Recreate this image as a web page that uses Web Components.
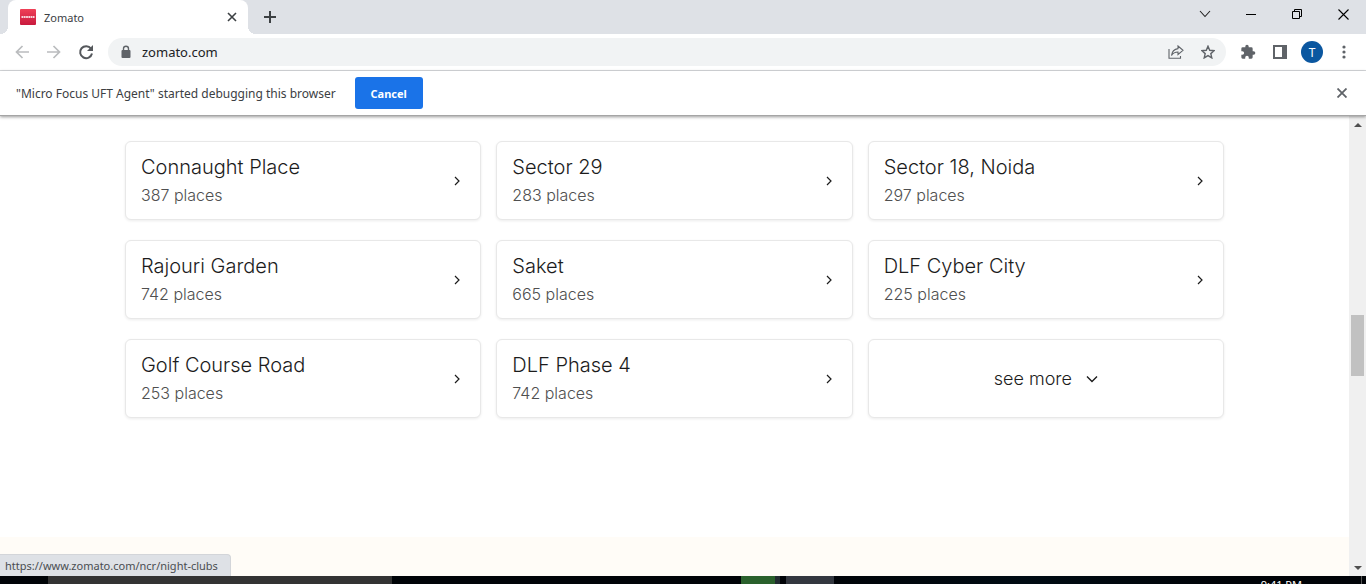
<!DOCTYPE html>
<html lang="en">
<head>
<meta charset="utf-8">
<title>Zomato</title>
<style>
html, body { height: 100%; margin: 0; }
body { font-family: "Noto Sans", "Open Sans", sans-serif; font-size: 11px; color: #3c4043; overflow: hidden; }
</style>
</head>
<body>
<browser-window></browser-window>
<script>
function define(name, html) {
  const template = document.createElement('template');
  template.innerHTML = '<style>*{box-sizing:border-box}svg{display:block;flex:none}button{font:inherit;color:inherit;background:none;border:0;padding:0;margin:0;display:flex;align-items:center;justify-content:center}</style>' + html;
  customElements.define(name, class extends HTMLElement {
    constructor() {
      super();
      this.attachShadow({ mode: 'open' }).append(template.content.cloneNode(true));
    }
  });
}

define('tab-strip', `
<style>
:host { display: flex; height: 34px; background: #dee1e6; color: #3c4043; padding-left: 8px; }
.tab { position: relative; width: 240px; background: #fff; border-radius: 8px 8px 0 0; display: flex; align-items: center; padding: 0 11px 0 12px; gap: 8px; }
.tab::before, .tab::after { content: ""; position: absolute; bottom: 0; width: 8px; height: 8px; }
.tab::before { left: -8px; background: radial-gradient(circle at 0 0, transparent 8px, #fff 8px); }
.tab::after { right: -8px; background: radial-gradient(circle at 100% 0, transparent 8px, #fff 8px); }
.title { flex: 1; }
.new { width: 44px; }
.controls { margin-left: auto; display: flex; }
.controls button { width: 46px; height: 28px; }
</style>
<div class="tab">
  <svg width="16" height="16" viewBox="0 0 16 16"><defs><linearGradient id="g" x2="0" y2="1"><stop stop-color="#ef4057"/><stop offset="1" stop-color="#c81a3e"/></linearGradient></defs><rect width="16" height="16" rx="1" fill="url(#g)"/><path d="M1.500 8h13" fill="none" stroke="#fff" stroke-opacity=".8" stroke-width="2" stroke-dasharray="1.800 .5"/></svg>
  <span class="title">Zomato</span>
  <button aria-label="Close tab"><svg width="10" height="10" viewBox="0 0 10 10"><path d="M1 1l8 8M9 1l-8 8" stroke="#3c4043" stroke-width="1.600"/></svg></button>
</div>
<button class="new" aria-label="New tab"><svg width="12" height="12" viewBox="0 0 12 12"><path d="M6 0v12M0 6h12" stroke="#3c4043" stroke-width="2"/></svg></button>
<div class="controls">
  <button aria-label="Search tabs"><svg width="12" height="8" viewBox="0 0 12 8"><path d="M1 1l5 5.500L11 1" fill="none" stroke="#222" stroke-width="1.100"/></svg></button>
  <button aria-label="Minimize"><svg width="10" height="10" viewBox="0 0 10 10"><path d="M0 5.500h10" stroke="#000"/></svg></button>
  <button aria-label="Restore"><svg width="10" height="10" viewBox="0 0 10 10"><path d="M.5 2.500h7v7h-7zM2.500 2.500v-2h7v7h-2" fill="none" stroke="#000"/></svg></button>
  <button aria-label="Close"><svg width="11" height="11" viewBox="0 0 11 11"><path d="M.5.5l10 10M10.500.5l-10 10" stroke="#000" stroke-width="1.100"/></svg></button>
</div>`);

define('tool-bar', `
<style>
:host { display: flex; align-items: center; height: 37px; background: #fff; border-bottom: 1px solid #d9dbde; padding: 0 6px; }
.nav { width: 32px; height: 28px; }
.address { flex: 1; display: flex; align-items: center; height: 28px; margin: 0 6px; border-radius: 14px; background: #f1f3f4; padding: 0 2px 0 12px; gap: 10px; }
input { flex: 1; min-width: 0; border: 0; padding: 0; background: none; font: 13px/20px "Noto Sans", "Open Sans", sans-serif; color: #202124; outline: 0; }
.address button { width: 32px; height: 28px; }
.tail, .actions { display: flex; }
.avatar { width: 22px; height: 22px; border-radius: 50%; background: #0b57a0; color: #fff; font-size: 12px; margin: 3px 5px; }
</style>
<button class="nav" aria-label="Back"><svg width="14" height="14" viewBox="0 0 14 14"><path d="M14 7H1.500M7.500 1l-6 6 6 6" fill="none" stroke="#babcbe" stroke-width="1.700"/></svg></button>
<button class="nav" aria-label="Forward"><svg width="14" height="14" viewBox="0 0 14 14"><path d="M0 7h12.500M6.500 1l6 6-6 6" fill="none" stroke="#babcbe" stroke-width="1.700"/></svg></button>
<button class="nav" aria-label="Reload"><svg width="16" height="16" viewBox="0 0 16 16"><path d="M13 4.600A6 6 0 1 0 14 9.500" fill="none" stroke="#55585c" stroke-width="2"/><path d="M15 1v6H9z" fill="#55585c"/></svg></button>
<div class="address">
  <svg width="12" height="14" viewBox="0 0 12 14"><path d="M3.500 6V3.800a2.500 2.500 0 0 1 5 0V6" fill="none" stroke="#5f6368" stroke-width="1.400"/><rect x="1.500" y="5" width="9" height="8" rx="1" fill="#5f6368"/></svg>
  <input type="text" aria-label="Address" value="zomato.com">
  <div class="actions">
    <button aria-label="Share"><svg width="16" height="14" viewBox="0 0 16 14"><path d="M1 4v9.300h11.500V11M10 1l5 4.300-5 4.200V7C7 7 5 8 3.500 10.500 4 6.500 6.500 4 10 3.600z" fill="none" stroke="#5f6368" stroke-width="1.100"/></svg></button>
    <button aria-label="Bookmark"><svg width="14" height="14" viewBox="0 0 14 14"><path d="M7 1.200l1.700 4.100 4.400.4-3.300 2.900 1 4.300L7 10.600l-3.800 2.300 1-4.300L.9 5.700l4.400-.4z" fill="none" stroke="#5f6368" stroke-width="1.400"/></svg></button>
  </div>
</div>
<div class="tail">
  <button class="nav" aria-label="Extensions"><svg width="16" height="16" viewBox="0 0 24 24"><path d="M20.500 11H19V7a2 2 0 0 0-2-2h-4V3.500a2.500 2.500 0 0 0-5 0V5H4a2 2 0 0 0-2 2v3.800h1.500a2.700 2.700 0 0 1 0 5.400H2V20a2 2 0 0 0 2 2h3.800v-1.500a2.700 2.700 0 0 1 5.400 0V22H17a2 2 0 0 0 2-2v-4h1.500a2.500 2.500 0 0 0 0-5z" fill="#5f6368"/></svg></button>
  <button class="nav" aria-label="Side panel"><svg width="14" height="14" viewBox="0 0 14 14"><path d="M1 1h12v12H1z" fill="none" stroke="#5f6368" stroke-width="2"/><path d="M9 0h5v14H9z" fill="#5f6368"/></svg></button>
  <button class="avatar" aria-label="Profile">T</button>
  <button class="nav" aria-label="Menu"><svg width="4" height="14" viewBox="0 0 4 14" fill="#5f6368"><circle cx="2" cy="2" r="1.600"/><circle cx="2" cy="7" r="1.600"/><circle cx="2" cy="12" r="1.600"/></svg></button>
</div>`);

define('info-bar', `
<style>
:host { display: flex; align-items: center; height: 45px; background: #fff; padding: 0 19px 0 16px; gap: 19px; border-bottom: 1px solid #a5a5a5; box-shadow: 0 1px 3px #0006; position: relative; z-index: 1; font-size: 12px; }
.cancel { width: 68px; height: 32px; border-radius: 3px; background: #1a73e8; color: #fff; font-weight: 700; font-size: 11px; }
.close { margin-left: auto; }
</style>
<span><slot></slot></span>
<button class="cancel">Cancel</button>
<button class="close" aria-label="Dismiss"><svg width="10" height="10" viewBox="0 0 10 10"><path d="M.5.5l9 9M9.500.5l-9 9" stroke="#5f6368" stroke-width="1.800"/></svg></button>`);

define('place-card', `
<style>
:host { display: block; }
a { display: flex; align-items: center; justify-content: space-between; height: 79px; padding: 0 19px 0 15px; border: 1px solid #e8e8e8; border-radius: 6px; background: #fff; box-shadow: 0 1px 3px #00000014; text-decoration: none; font-family: Inter, "Open Sans", sans-serif; font-weight: 300; color: #1c1c1c; }
.name { display: block; font-size: 20px; line-height: 28px; }
.count { display: block; font-size: 16px; line-height: 28px; color: #4f4f4f; }
</style>
<a href="#"><span><span class="name"><slot></slot></span><span class="count"><slot name="count"></slot></span></span>
<svg width="8" height="10" viewBox="0 0 8 10"><path d="M2 1l4 4-4 4" fill="none" stroke="#1c1c1c" stroke-width="1.200"/></svg></a>`);

define('see-more', `
<style>
:host { display: block; }
button { width: 100%; height: 79px; gap: 14px; border: 1px solid #e8e8e8; border-radius: 6px; background: #fff; box-shadow: 0 1px 3px #00000014; font: 300 18px/28px Inter, "Open Sans", sans-serif; color: #1c1c1c; }
</style>
<button><span><slot></slot></span><svg width="12" height="8" viewBox="0 0 12 8"><path d="M1 1.500l5 5 5-5" fill="none" stroke="#1c1c1c" stroke-width="1.400"/></svg></button>`);

define('place-list', `
<style>
:host { display: grid; grid-template-columns: repeat(3, 1fr); gap: 20px 15px; padding: 25px 125px 119px; background: #fff; }
</style>
<slot></slot>`);

define('scroll-bar', `
<style>
:host { display: flex; flex-direction: column; align-items: center; width: 17px; background: #f0f0f0; }
svg { margin: 7px 0 6px; }
.before { flex: 181; }
.thumb { width: 13px; height: 61px; background: #c1c1c1; }
.after { flex: 182; }
</style>
<svg width="8" height="4" viewBox="0 0 8 4"><path d="M0 4l4-4 4 4z" fill="#505050"/></svg>
<div class="before"></div><div class="thumb"></div><div class="after"></div>
<svg width="8" height="4" viewBox="0 0 8 4"><path d="M0 0l4 4 4-4z" fill="#505050"/></svg>`);

define('status-bubble', `
<style>
:host { position: absolute; left: 0; bottom: 0; height: 22px; padding: 0 12px 0 5px; line-height: 22px; background: #dee1e6; border-radius: 0 4px 0 0; border: solid #d3d5d9; border-width: 1px 1px 0 0; color: #4a4d51; box-sizing: border-box; }
</style><slot></slot>`);

define('task-bar', `
<style>
:host { display: flex; height: 8px; overflow: hidden; background: linear-gradient(90deg, #000307 60%, #000b13 75%, #000307 90%); color: #fff; }
.search { width: 344px; margin-left: 48px; background: #333; }
.green { width: 34px; margin-left: 349px; background: #2a602c; }
.edge { width: 5px; background: #222b30; margin-right: 6px; }
.app { width: 48px; background: #33373f; }
time { margin-left: auto; padding-top: 3px; line-height: 12px; margin-right: 59px; }
.desktop { width: 1px; background: #555; margin-right: 4px; }
</style>
<div class="search"></div><div class="green"></div><div class="edge"></div><div class="app"></div>
<time>9:41 PM</time><div class="desktop"></div>`);

define('browser-window', `
<style>
:host { display: flex; flex-direction: column; height: 100vh; }
.view { flex: 1; min-height: 0; display: flex; position: relative; }
main { flex: 1; min-width: 0; overflow: hidden; background: #fffcf7; }
</style>
<tab-strip></tab-strip>
<tool-bar></tool-bar>
<info-bar>"Micro Focus UFT Agent" started debugging this browser</info-bar>
<div class="view">
  <main>
    <place-list>
      <place-card>Connaught Place<span slot="count">387 places</span></place-card>
      <place-card>Sector 29<span slot="count">283 places</span></place-card>
      <place-card>Sector 18, Noida<span slot="count">297 places</span></place-card>
      <place-card>Rajouri Garden<span slot="count">742 places</span></place-card>
      <place-card>Saket<span slot="count">665 places</span></place-card>
      <place-card>DLF Cyber City<span slot="count">225 places</span></place-card>
      <place-card>Golf Course Road<span slot="count">253 places</span></place-card>
      <place-card>DLF Phase 4<span slot="count">742 places</span></place-card>
      <see-more>see more</see-more>
    </place-list>
  </main>
  <scroll-bar></scroll-bar>
  <status-bubble>https://www.zomato.com/ncr/night-clubs</status-bubble>
</div>
<task-bar></task-bar>`);
</script>
</body>
</html>
